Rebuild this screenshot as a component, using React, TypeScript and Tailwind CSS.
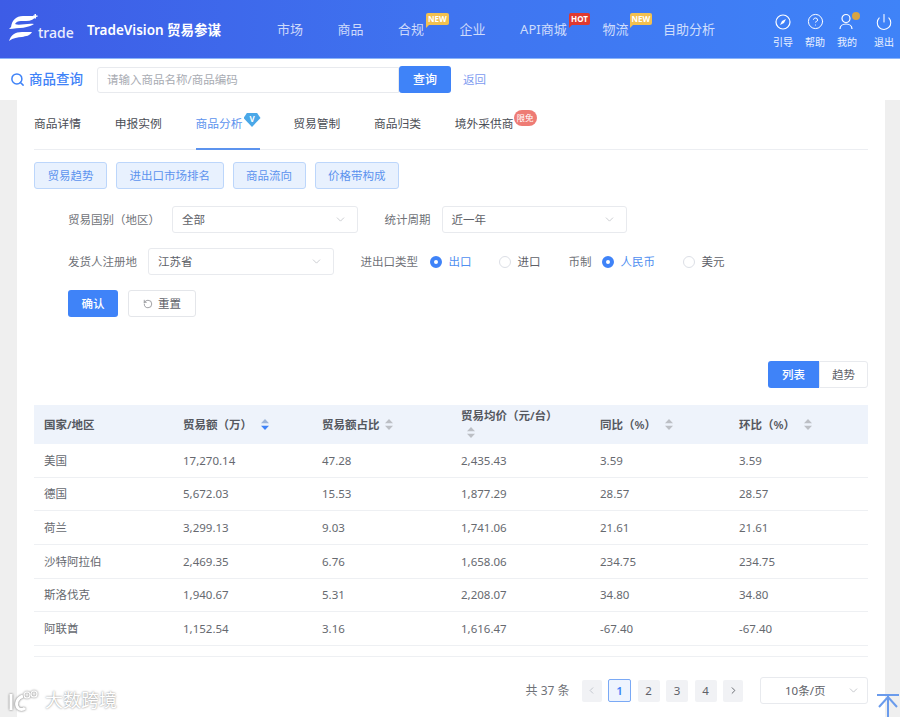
import React from 'react';
import { ChevronDown, ChevronLeft, ChevronRight, CircleHelp, Power, RotateCcw, Search } from 'lucide-react';

const navItems = [
  { label: '市场', width: 'w-[26px]' },
  { label: '商品', width: 'w-[26px]' },
  { label: '合规', width: 'w-[27px]', badge: 'NEW' },
  { label: '企业', width: 'w-[26px]' },
  { label: 'API商城', width: 'w-[48px]', badge: 'HOT' },
  { label: '物流', width: 'w-[26px]', badge: 'NEW' },
  { label: '自助分析', width: 'w-[53px]' },
];

const rows = [
  ['美国', '17,270.14', '47.28', '2,435.43', '3.59', '3.59'],
  ['德国', '5,672.03', '15.53', '1,877.29', '28.57', '28.57'],
  ['荷兰', '3,299.13', '9.03', '1,741.06', '21.61', '21.61'],
  ['沙特阿拉伯', '2,469.35', '6.76', '1,658.06', '234.75', '234.75'],
  ['斯洛伐克', '1,940.67', '5.31', '2,208.07', '34.80', '34.80'],
  ['阿联酋', '1,152.54', '3.16', '1,616.47', '-67.40', '-67.40'],
];

function Logo() {
  return (
    <div className="flex items-end w-[74px] h-[30px] mt-[-4px]">
      <svg width="30" height="28" viewBox="0 0 30 28" fill="white" className="shrink-0">
        <path d="M3 13C4 6 8 2 15 2H29C26 5 23 7 18 7H13C10 7 8 8 7 10C11 12 19 9 26 10C21 14 11 14 1 15Z" />
        <path d="M1 27C3 21 7 18 14 18H24C22 22 18 22 14 23C10 23 5 24 1 27Z" />
        <path d="M26.5 0H28V1.6H29.6V2.8H28V4.4H26.5V2.8H25V1.6H26.5Z" />
      </svg>
      <span className="mb-[1px] text-[14px] leading-[16px] font-medium text-white/90">trade</span>
    </div>
  );
}

function NavBadge({ text }: { text: string }) {
  const color = text === 'HOT' ? 'bg-[#e0392f] border-t-[#e0392f]' : 'bg-[#f3c04f] border-t-[#f3c04f]';
  return (
    <span className={`absolute left-[calc(100%+1px)] -top-[7px] ${color} h-[12px] px-[2px] rounded-[2px] rounded-bl-none text-[8px] leading-[12px] font-bold text-white`}>
      {text}
      <span className={`absolute left-0 top-full w-0 h-0 border-t-[3px] border-r-[3px] border-r-transparent ${color} bg-transparent`} />
    </span>
  );
}

function HeaderAction({ label, icon }: { label: string; icon: React.ReactNode }) {
  return (
    <div className="flex flex-col items-center w-[20px]">
      <div className="h-[22px] flex items-center justify-center">{icon}</div>
      <span className="mt-[3px] text-[10px] leading-[12px] whitespace-nowrap text-white/90">{label}</span>
    </div>
  );
}

function Header() {
  return (
    <header className="h-[59px] flex items-center pl-[8px] bg-gradient-to-r from-[#3d5ce6] via-[#3f74f0] to-[#3f83f8] border-b border-[#8ab4fa]">
      <Logo />
      <span className="ml-[5px] pt-[2px] text-[13.5px] font-semibold text-white whitespace-nowrap">TradeVision 贸易参谋</span>
      <nav className="ml-[56px] pt-[2px] flex items-center gap-[34.5px] text-[13px] text-white/75">
        {navItems.map((item) => (
          <span key={item.label} className={`relative whitespace-nowrap ${item.width}`}>
            {item.label}
            {item.badge && <NavBadge text={item.badge} />}
          </span>
        ))}
      </nav>
      <div className="ml-[57px] flex items-start gap-[12px] text-white">
        <HeaderAction
          label="引导"
          icon={
            <svg width="16" height="16" viewBox="0 0 16 16" fill="none" stroke="currentColor" strokeWidth="1.2">
              <circle cx="8" cy="8" r="7" />
              <path d="M11 5 9 9 5 11 7 7Z" fill="currentColor" stroke="none" />
            </svg>
          }
        />
        <HeaderAction label="帮助" icon={<CircleHelp size={17} strokeWidth={1.4} />} />
        <HeaderAction
          label="我的"
          icon={
            <span className="relative flex">
              <svg width="17" height="17" viewBox="0 0 17 17" fill="none" stroke="currentColor" strokeWidth="1.2">
                <circle cx="7" cy="5.5" r="4" />
                <path d="M1 16c0-3 2.5-5 6-5s6 2 6 5" />
              </svg>
              <span className="absolute -right-[4px] -top-[1px] w-[8px] h-[8px] rounded-full bg-[#d9a441]" />
            </span>
          }
        />
        <span className="ml-[5px]">
          <HeaderAction label="退出" icon={<Power size={18} strokeWidth={1.4} />} />
        </span>
      </div>
    </header>
  );
}

function SearchBar() {
  return (
    <div className="h-[41px] bg-white flex items-center pl-[10px]">
      <Search size={15} strokeWidth={2.4} className="text-[#3f83f8]" />
      <span className="ml-[4px] text-[13.5px] font-medium text-[#3f83f8] whitespace-nowrap">商品查询</span>
      <div className="ml-[14px] h-[26px] w-[302px] border border-[#e8eaee] rounded-l-[3px] flex items-center pl-[9px] text-[11.5px] text-[#a8abb2]">
        请输入商品名称/商品编码
      </div>
      <button className="h-[27px] w-[52px] bg-[#3f83f8] rounded-[3px] text-white text-[12px] font-medium">查询</button>
      <span className="ml-[12px] text-[11.5px] text-[#7d9bf0]">返回</span>
    </div>
  );
}

function Tabs() {
  const tabs = ['商品详情', '申报实例', '商品分析', '贸易管制', '商品归类', '境外采供商'];
  return (
    <div className="h-[50px] border-b border-[#eceef2] flex gap-[33.75px] text-[11.75px]">
      {tabs.map((tab) => {
        const active = tab === '商品分析';
        return (
          <div key={tab} className={`relative pt-[15px] h-[50px] ${active ? 'w-[64px] border-b-2 border-[#5c93ee] text-[#5c93ee]' : 'text-[#4a4d55]'}`}>
            {tab}
            {active && (
              <span className="absolute left-[48px] top-[13px] w-[17px] h-[14px] bg-[#4aa8e8] text-white text-[8px] leading-[11px] font-bold text-center [clip-path:polygon(20%_0,80%_0,100%_35%,50%_100%,0_35%)]">
                V
              </span>
            )}
            {tab === '境外采供商' && (
              <span className="absolute -right-[23px] top-[10px] h-[16px] w-[23px] rounded-full bg-[#ee7b74] text-center text-white text-[8.5px] leading-[15px]">
                限免
              </span>
            )}
          </div>
        );
      })}
    </div>
  );
}

function SubTabs() {
  const items = ['贸易趋势', '进出口市场排名', '商品流向', '价格带构成'];
  return (
    <div className="mt-[12px] flex gap-[9px]">
      {items.map((item) => (
        <div key={item} className="h-[27px] px-[12.5px] flex items-center rounded-[3px] border border-[#bcd6fb] bg-[#e8f1fe] text-[11.5px] text-[#5c93ee]">
          {item}
        </div>
      ))}
    </div>
  );
}

function SelectBox({ value }: { value: string }) {
  return (
    <div className="h-[27px] w-[185.5px] border border-[#e8eaee] rounded-[3px] flex items-center justify-between pl-[9px] pr-[10px] text-[11.5px] text-[#5e6168]">
      {value}
      <ChevronDown size={13} strokeWidth={1.2} className="text-[#b0b3ba]" />
    </div>
  );
}

function Radio({ label, checked, className }: { label: string; checked?: boolean; className: string }) {
  return (
    <div className={`flex items-center gap-[7px] text-[11.5px] ${className}`}>
      {checked ? (
        <span className="w-[12px] h-[12px] rounded-full border-[4px] border-[#3f83f8] bg-white" />
      ) : (
        <span className="w-[12px] h-[12px] rounded-full border border-[#dcdfe6] bg-white" />
      )}
      <span className={checked ? 'text-[#4f8ff0]' : 'text-[#5e6168]'}>{label}</span>
    </div>
  );
}

function Filters() {
  return (
    <div className="mt-[17px] pl-[34px] text-[11.5px] text-[#6f7278]">
      <div className="flex items-center">
        <span className="w-[104px]">贸易国别（地区）</span>
        <SelectBox value="全部" />
        <span className="ml-[27px] w-[57px]">统计周期</span>
        <SelectBox value="近一年" />
      </div>
      <div className="mt-[15px] flex items-center">
        <span className="w-[80px]">发货人注册地</span>
        <SelectBox value="江苏省" />
        <span className="ml-[27px] w-[69px]">进出口类型</span>
        <Radio label="出口" checked className="w-[69px]" />
        <Radio label="进口" className="w-[70px]" />
        <span className="w-[33px]">币制</span>
        <Radio label="人民币" checked className="w-[81px]" />
        <Radio label="美元" className="w-[60px]" />
      </div>
      <div className="mt-[15px] flex gap-[10px]">
        <button className="h-[27px] w-[50px] rounded-[3px] bg-[#3f83f8] text-white text-[11.5px] font-medium">确认</button>
        <button className="h-[27px] w-[68px] rounded-[3px] border border-[#e4e6ea] flex items-center justify-center gap-[5px] text-[#5e6168] text-[11.5px]">
          <RotateCcw size={10} strokeWidth={1.4} />
          重置
        </button>
      </div>
    </div>
  );
}

function SortIcon({ active }: { active?: boolean }) {
  return (
    <svg width="8" height="11" viewBox="0 0 8 11" className="shrink-0">
      <path d="M4 0 8 4.3H0Z" fill={active ? '#9db4d8' : '#bcbfc5'} />
      <path d="M4 11 0 6.7H8Z" fill={active ? '#3f83f8' : '#bcbfc5'} />
    </svg>
  );
}

function DataTable() {
  const cell = 'w-[139px] pl-[10px] shrink-0';
  return (
    <div className="text-[11.5px]">
      <div className="h-[39px] bg-[#eef3fb] flex items-center font-semibold text-[#55585f]">
        <div className={cell}>国家/地区</div>
        <div className={`${cell} flex items-center gap-[9px]`}>贸易额（万）<SortIcon active /></div>
        <div className={`${cell} flex items-center gap-[5px]`}>贸易额占比<SortIcon /></div>
        <div className={cell}>
          <div className="leading-[17px] -mt-[3px]">贸易均价（元/台）</div>
          <div className="mt-[2px] pl-[6px] h-[13px] flex items-center"><SortIcon /></div>
        </div>
        <div className={`${cell} flex items-center gap-[9px]`}>同比（%）<SortIcon /></div>
        <div className={`${cell} flex items-center gap-[9px]`}>环比（%）<SortIcon /></div>
      </div>
      {rows.map((row) => (
        <div key={row[0]} className="h-[33.7px] flex items-center border-b border-[#eef0f3] text-[#66696f]">
          {row.map((value, i) => (
            <div key={i} className={cell}>{value}</div>
          ))}
        </div>
      ))}
      <div className="h-[11px] border-b border-[#eef0f3]" />
    </div>
  );
}

function Pagination() {
  const box = 'h-[22px] rounded-[2px] flex items-center justify-center bg-[#f1f2f5] text-[11.5px] text-[#5e6168]';
  return (
    <div className="mt-[20px] flex items-center justify-end text-[12px] text-[#6f7278]">
      <span className="mr-[12px]">共 37 条</span>
      <div className="flex items-center gap-[6.5px]">
        <span className={`${box} w-[20px] text-[#c0c4cc]`}><ChevronLeft size={11} /></span>
        <span className="w-[23px] h-[23px] rounded-[2px] flex items-center justify-center border border-[#7aa9f5] bg-[#eef4fe] text-[#3f83f8] font-semibold text-[11.5px]">1</span>
        <span className={`${box} w-[22px]`}>2</span>
        <span className={`${box} w-[22px]`}>3</span>
        <span className={`${box} w-[22px]`}>4</span>
        <span className={`${box} w-[20px]`}><ChevronRight size={11} /></span>
      </div>
      <div className="ml-[17px] h-[27px] w-[108px] border border-[#e8eaee] rounded-[3px] flex items-center justify-between pl-[24px] pr-[7px] text-[11.5px] text-[#5e6168]">
        10条/页
        <ChevronDown size={13} strokeWidth={1.2} className="text-[#a8abb2]" />
      </div>
    </div>
  );
}

export default function App() {
  return (
    <div className="relative w-[900px] h-[717px] overflow-hidden bg-[#efefef] [font-family:'Noto_Sans','Noto_Sans_CJK_SC',sans-serif]">
      <Header />
      <SearchBar />
      <main className="mx-[17px] w-[868px] h-[617px] bg-white px-[17px]">
        <Tabs />
        <SubTabs />
        <Filters />
        <div className="mt-[44px] flex justify-end text-[11.5px]">
          <span className="h-[27px] w-[51px] rounded-l-[3px] bg-[#3f83f8] text-white flex items-center justify-center font-medium">列表</span>
          <span className="h-[27px] w-[49px] rounded-r-[3px] border border-[#e8eaee] text-[#5e6168] flex items-center justify-center">趋势</span>
        </div>
        <div className="mt-[17px]">
          <DataTable />
        </div>
        <Pagination />
      </main>
      <div className="absolute left-[9px] bottom-[5px] flex items-center text-white [text-shadow:0_0_2px_#777777]">
        <svg width="32" height="24" viewBox="0 0 32 24" fill="none" stroke="#ffffff" strokeWidth="2" className="drop-shadow-[0_0_1px_#666]">
          <path d="M2 6V22" strokeWidth="3" />
          <path d="M14 8C8 10 6 16 9 20C11 22 14 22 16 20" strokeWidth="3" />
          <circle cx="18" cy="7" r="3" strokeWidth="1.2" />
          <circle cx="25" cy="6" r="3" strokeWidth="1.2" />
        </svg>
        <span className="ml-[4px] text-[18px] leading-[20px]">大数跨境</span>
      </div>
      <svg width="24" height="24" viewBox="0 0 24 24" fill="none" stroke="#6a9bec" strokeWidth="2" className="absolute right-0 bottom-0">
        <path d="M1 2H23" />
        <path d="M12 3V24" />
        <path d="M3 14 12 4 21 14" />
      </svg>
    </div>
  );
}
